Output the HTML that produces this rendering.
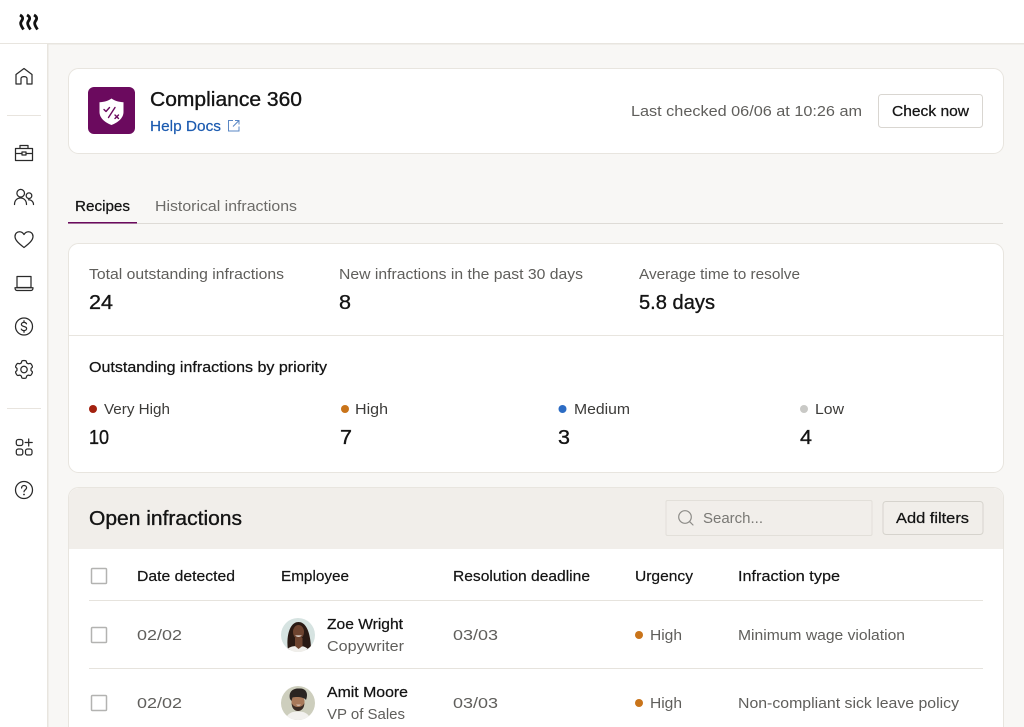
<!DOCTYPE html>
<html lang="en">
<head>
<meta charset="utf-8">
<title>Compliance 360</title>
<style>
html,body{margin:0;padding:0;width:1024px;height:727px;overflow:hidden;background:#f8f7f5}
svg{display:block}
text{font-family:"Liberation Sans",sans-serif;font-size:15.200px;fill:#5f5e5b}
.m{font-size:15px;fill:#141414;stroke:#141414;stroke-width:.25px}
.h{font-size:20.500px;stroke-width:.35px}
.ic{fill:none;stroke:#2a2a2a;stroke-width:1.250;stroke-linecap:round;stroke-linejoin:round}
</style>
</head>
<body>
<svg width="1024" height="727" viewBox="0 0 1024 727" xmlns="http://www.w3.org/2000/svg">
<rect width="1024" height="727" fill="#f8f7f5"/>
<!-- top bar + sidebar -->
<rect width="1024" height="43" fill="#fff"/>
<rect y="43" width="1024" height="1.500" fill="#e8e5df"/>
<rect y="44" width="47" height="683" fill="#fff"/>
<rect x="47" y="44" width="1.500" height="683" fill="#e8e5df"/>
<g fill="none" stroke="#111" stroke-width="2.800" stroke-linecap="butt">
<path d="M20 15C23.500 17 23 19 21.500 21C20 23 20.500 25 23.500 29.500"/>
<path d="M27 15C30.500 17 30 19 28.500 21C27 23 27.500 25 30.500 29.500"/>
<path d="M34 15C37.500 17 37 19 35.500 21C34 23 34.500 25 37.500 29.500"/>
</g>
<rect x="7" y="115" width="34" height="1" fill="#e8e4de"/>
<rect x="7" y="408" width="34" height="1" fill="#e8e4de"/>
<g class="ic">
<path d="M16 84V74.500L24 68.500L32 74.500V84H27V78.500C27 76 21 76 21 78.500V84Z"/>
<path d="M15.500 148.500H32.500V160.500H15.500ZM15.500 153.500H32.500M20 148.500V145.500H28V148.500"/><rect x="22" y="152" width="4" height="3" fill="#fff"/>
<circle cx="20.700" cy="193.200" r="3.800"/><circle cx="29" cy="195.700" r="2.800"/><path d="M14.500 204.500c0-4 2.500-6.500 6-6.500s6 2.500 6 6.500M28.500 199.700c2.800 0 5 2 5 4.800"/>
<path d="M24 247.500C21 245 15 241 15 236.500C15 233.500 17.200 231.700 19.500 231.700C21.500 231.700 23 232.800 24 234.500C25 232.800 26.500 231.700 28.500 231.700C30.800 231.700 33 233.500 33 236.500C33 241 27 245 24 247.500Z"/>
<path d="M17 276.500H31V287.500H17ZM15 287.800H33C33 290 32 290.500 31 290.500H17C16 290.500 15 290 15 287.800Z"/>
<circle cx="24" cy="326.500" r="8.500"/>
<path d="M26.500 323.800c-.5-1-1.400-1.400-2.500-1.400c-1.500 0-2.600.8-2.600 2c0 2.900 5.200 1.300 5.200 4.200c0 1.200-1.100 2-2.600 2c-1.200 0-2.200-.5-2.700-1.500M24 320.800v1.600M24 330.600v1.600"/>
<circle cx="24" cy="369.500" r="3.200"/>
<path d="M21.800 361.200c.3-.9 4.100-.9 4.400 0l.5 1.700 1.600.9 1.700-.4c.9-.3 3 3.100 2.200 3.900l-1.200 1.200v1.900l1.200 1.200c.8.800-1.300 4.200-2.200 3.900l-1.700-.4-1.600.9-.5 1.700c-.3.9-4.100.9-4.400 0l-.5-1.700-1.600-.9-1.700.4c-.9.300-3-3.100-2.200-3.900l1.200-1.200v-1.900l-1.200-1.200c-.8-.8 1.300-4.200 2.200-3.900l1.700.4 1.600-.9z"/>
<rect x="16.300" y="439.500" width="6.500" height="6" rx="2"/><rect x="16.300" y="449" width="6.500" height="6" rx="2"/><rect x="25.500" y="449" width="6.500" height="6" rx="2"/><path d="M28.700 439v7M25.200 442.500h7"/>
<circle cx="24" cy="490" r="8.500"/>
<path d="M21.600 488c0-1.500 1.100-2.500 2.500-2.500s2.500 1 2.500 2.300c0 1.900-2.600 2-2.600 4"/>
</g>
<circle cx="24" cy="494.500" r=".9" fill="#222"/>
<!-- header card -->
<rect x="68.500" y="68.500" width="935" height="85" rx="10" fill="#fff" stroke="#e8e5df"/>
<rect x="88" y="87" width="47" height="47" rx="6" fill="#6b0a5e"/>
<path d="M111.500 98.500C115 101 119 102 123.500 102.300V112C123.500 118 118 122.500 111.500 125C105 122.500 99.500 118 99.500 112V102.300C104 102 108 101 111.500 98.500Z" fill="#fff"/>
<g fill="none" stroke="#6b0a5e" stroke-width="1.400" stroke-linecap="round" stroke-linejoin="round">
<path d="M104 109.500l2 2 3.500-4M108.500 117.500l6.500-10M115 115l3.500 3.500M118.500 115l-3.500 3.500"/>
</g>
<text lengthAdjust="spacingAndGlyphs" class="m h" x="150" y="106" textLength="152">Compliance 360</text>
<text lengthAdjust="spacingAndGlyphs" x="150" y="131" textLength="71" style="font-size:14.800px;fill:#1c5bb0;stroke:#1c5bb0;stroke-width:.2px">Help Docs</text>
<g fill="none" stroke="#5a87c4" stroke-width="1"><path d="M233 120.500H228.500V131H239V126.500M233 126.500L238.500 121M235 120.500H239V124.500"/></g>
<text lengthAdjust="spacingAndGlyphs" x="631" y="116" textLength="231">Last checked 06/06 at 10:26 am</text>
<rect x="878.500" y="94.500" width="104" height="33" rx="3" fill="#fff" stroke="#d9d6d1"/>
<text lengthAdjust="spacingAndGlyphs" class="m" x="892" y="116" textLength="77">Check now</text>
<!-- tabs -->
<rect x="68" y="223" width="935" height="1" fill="#dedbd6"/>
<rect x="68" y="222" width="69" height="1.500" fill="#6b0a5e"/>
<text lengthAdjust="spacingAndGlyphs" class="m" x="75" y="211" textLength="55" style="font-size:14.800px">Recipes</text>
<text lengthAdjust="spacingAndGlyphs" x="155" y="211" textLength="142" style="fill:#6c6b68">Historical infractions</text>
<!-- stats card -->
<rect x="68.500" y="243.500" width="935" height="229" rx="10" fill="#fff" stroke="#e8e5df"/>
<rect x="69" y="335" width="934" height="1" fill="#e8e5df"/>
<text lengthAdjust="spacingAndGlyphs" x="89" y="279" textLength="195">Total outstanding infractions</text>
<text lengthAdjust="spacingAndGlyphs" x="339" y="279" textLength="244">New infractions in the past 30 days</text>
<text lengthAdjust="spacingAndGlyphs" x="639" y="279" textLength="161">Average time to resolve</text>
<text lengthAdjust="spacingAndGlyphs" class="m h" x="89" y="309" textLength="24">24</text>
<text lengthAdjust="spacingAndGlyphs" class="m h" x="339" y="309" textLength="12">8</text>
<text lengthAdjust="spacingAndGlyphs" class="m h" x="639" y="309" textLength="76">5.8 days</text>
<text lengthAdjust="spacingAndGlyphs" class="m" x="89" y="372" textLength="238" style="font-size:14.800px">Outstanding infractions by priority</text>
<circle cx="93" cy="409" r="4" fill="#a3210f"/>
<circle cx="345" cy="409" r="4" fill="#c9741a"/>
<circle cx="562.500" cy="409" r="4" fill="#2c6cc4"/>
<circle cx="804" cy="409" r="4" fill="#c9c9c6"/>
<text lengthAdjust="spacingAndGlyphs" x="104" y="414" textLength="66" style="fill:#3c3b39">Very High</text>
<text lengthAdjust="spacingAndGlyphs" x="355" y="414" textLength="33" style="fill:#3c3b39">High</text>
<text lengthAdjust="spacingAndGlyphs" x="574" y="414" textLength="56" style="fill:#3c3b39">Medium</text>
<text lengthAdjust="spacingAndGlyphs" x="815" y="414" textLength="29" style="fill:#3c3b39">Low</text>
<text lengthAdjust="spacingAndGlyphs" class="m h" x="89" y="444" textLength="20">10</text>
<text lengthAdjust="spacingAndGlyphs" class="m h" x="340" y="444" textLength="12">7</text>
<text lengthAdjust="spacingAndGlyphs" class="m h" x="558" y="444" textLength="12">3</text>
<text lengthAdjust="spacingAndGlyphs" class="m h" x="800" y="444" textLength="12">4</text>
<!-- table card -->
<path d="M68.500 740V497.500a10 10 0 0 1 10-10H993.500a10 10 0 0 1 10 10V740Z" fill="#fff" stroke="#e8e5df"/>
<path d="M69 549V498a10 10 0 0 1 10-10H993a10 10 0 0 1 10 10V549Z" fill="#f1eeea"/>
<text lengthAdjust="spacingAndGlyphs" class="m h" x="89" y="525" textLength="153">Open infractions</text>
<rect x="666" y="500.500" width="206" height="35" rx="1.500" fill="#f1eeea" stroke="#e2dfd9"/>
<g fill="none" stroke="#8d8c88" stroke-width="1.200" stroke-linecap="round"><circle cx="685" cy="517" r="6.300"/><path d="M689.700 521.700L693 525"/></g>
<text lengthAdjust="spacingAndGlyphs" x="703" y="523" textLength="60" style="fill:#797874">Search...</text>
<rect x="883" y="501.500" width="100" height="33" rx="3" fill="#f1eeea" stroke="#d6d3cd"/>
<text lengthAdjust="spacingAndGlyphs" class="m" x="896" y="523" textLength="73">Add filters</text>
<!-- table -->
<rect x="91.500" y="568.500" width="15" height="15" rx="1" fill="#fff" stroke="#b3b3b1" stroke-width="1.500"/>
<text lengthAdjust="spacingAndGlyphs" class="m" x="137" y="581" textLength="98" style="stroke-width:.2px">Date detected</text>
<text lengthAdjust="spacingAndGlyphs" class="m" x="281" y="581" textLength="68" style="stroke-width:.2px">Employee</text>
<text lengthAdjust="spacingAndGlyphs" class="m" x="453" y="581" textLength="137" style="stroke-width:.2px">Resolution deadline</text>
<text lengthAdjust="spacingAndGlyphs" class="m" x="635" y="581" textLength="58" style="stroke-width:.2px">Urgency</text>
<text lengthAdjust="spacingAndGlyphs" class="m" x="738" y="581" textLength="102" style="stroke-width:.2px">Infraction type</text>
<rect x="89" y="600" width="894" height="1" fill="#e6e3dd"/>
<rect x="89" y="668" width="894" height="1" fill="#e6e3dd"/>
<!-- row 1 -->
<rect x="91.500" y="627.500" width="15" height="15" rx="1" fill="#fff" stroke="#b3b3b1" stroke-width="1.500"/>
<text lengthAdjust="spacingAndGlyphs" x="137" y="640" textLength="45">02/02</text>
<clipPath id="a1"><circle cx="298" cy="635" r="17"/></clipPath>
<g clip-path="url(#a1)">
<rect x="281" y="618" width="34" height="34" fill="#d6e3e1"/>
<path d="M288 650C286 638 289 622 298.500 622C308 622 311 638 311 650Z" fill="#2a1a14"/>
<path d="M285 653C287 647 292 646 298 646C304 646 308 647 310 653Z" fill="#f0eeea"/>
<path d="M295 638H302.500V646L298.500 649L295 646Z" fill="#6e4430"/>
<ellipse cx="298.500" cy="632" rx="5.500" ry="7" fill="#6e4430"/>
<path d="M295 635.500q3.500 2.500 7 0Z" fill="#fff"/>
</g>
<text lengthAdjust="spacingAndGlyphs" class="m" x="327" y="629" textLength="76">Zoe Wright</text>
<text lengthAdjust="spacingAndGlyphs" x="327" y="651" textLength="77">Copywriter</text>
<text lengthAdjust="spacingAndGlyphs" x="453" y="640" textLength="45">03/03</text>
<circle cx="639" cy="635" r="4" fill="#c9741a"/>
<text lengthAdjust="spacingAndGlyphs" x="650" y="640" textLength="32">High</text>
<text lengthAdjust="spacingAndGlyphs" x="738" y="640" textLength="167">Minimum wage violation</text>
<!-- row 2 -->
<rect x="91.500" y="695.500" width="15" height="15" rx="1" fill="#fff" stroke="#b3b3b1" stroke-width="1.500"/>
<text lengthAdjust="spacingAndGlyphs" x="137" y="708" textLength="45">02/02</text>
<clipPath id="a2"><circle cx="298" cy="703" r="17"/></clipPath>
<g clip-path="url(#a2)">
<rect x="281" y="686" width="34" height="34" fill="#cdcebd"/>
<path d="M285 721C287 713 292 711.500 298 711.500C304 711.500 309 713 311 721Z" fill="#f2f1ee"/>
<ellipse cx="298" cy="702" rx="6.500" ry="8.500" fill="#a8795a"/>
<path d="M298 707c-3 0-5.500-1.500-6.300-4c-.2 5 2.800 8 6.300 8s6.500-3 6.300-8c-.8 2.500-3.300 4-6.300 4Z" fill="#3a2b24"/>
<path d="M296 704.800q2.500 1.500 5 0Z" fill="#fff"/>
<path d="M290 699C288 691 294 688 299 688.500C305 688 309 692 306 700C304 697 297 696.500 292.500 697.500L291.500 701Z" fill="#2a2421"/>
</g>
<text lengthAdjust="spacingAndGlyphs" class="m" x="327" y="697" textLength="81">Amit Moore</text>
<text lengthAdjust="spacingAndGlyphs" x="327" y="719" textLength="78">VP of Sales</text>
<text lengthAdjust="spacingAndGlyphs" x="453" y="708" textLength="45">03/03</text>
<circle cx="639" cy="703" r="4" fill="#c9741a"/>
<text lengthAdjust="spacingAndGlyphs" x="650" y="708" textLength="32">High</text>
<text lengthAdjust="spacingAndGlyphs" x="738" y="708" textLength="221">Non-compliant sick leave policy</text>
</svg>
</body>
</html>
